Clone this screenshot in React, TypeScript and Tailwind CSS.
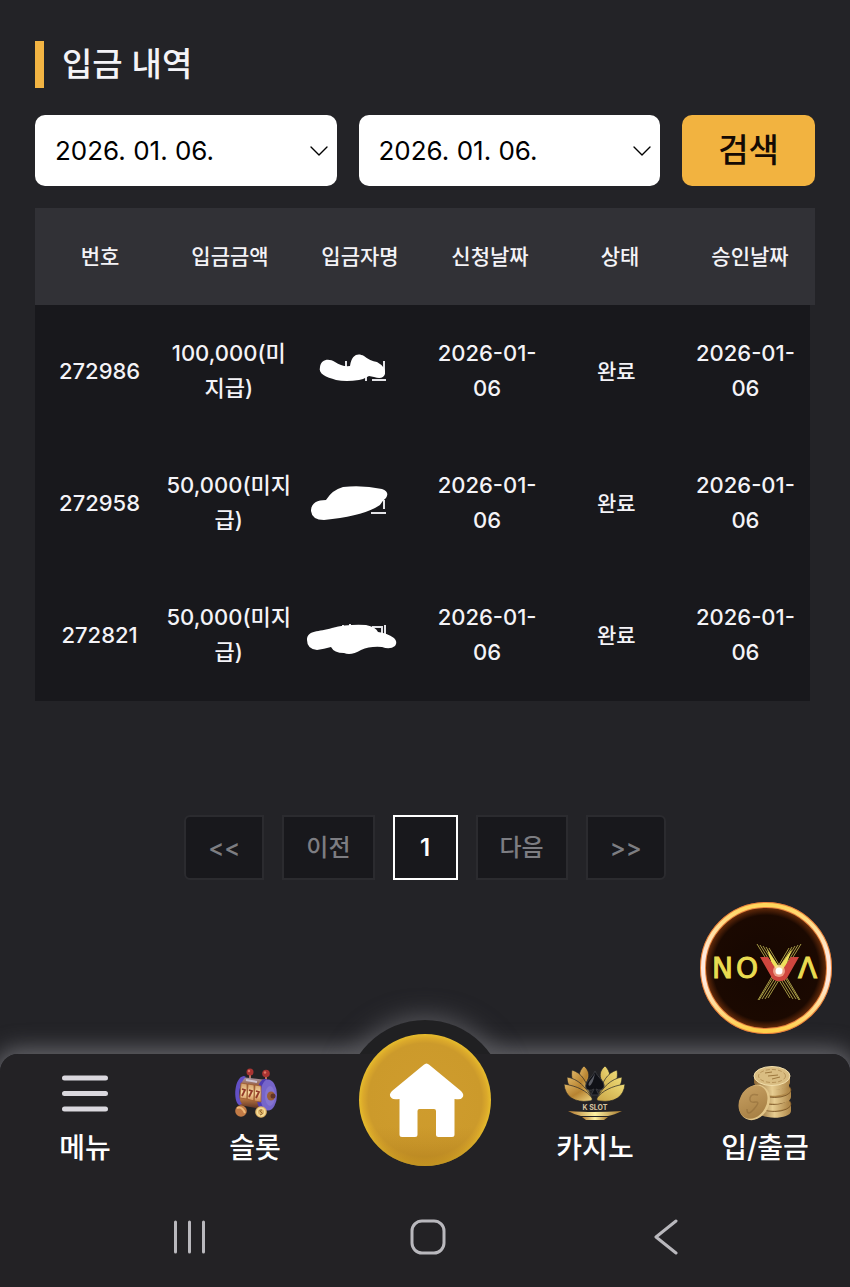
import type { ReactNode } from 'react'
import { ChevronDown } from 'lucide-react'

const deposits = [
  { id: '272986', amount: '100,000(미지급)', requested: '2026-01-06', status: '완료', approved: '2026-01-06' },
  { id: '272958', amount: '50,000(미지급)', requested: '2026-01-06', status: '완료', approved: '2026-01-06' },
  { id: '272821', amount: '50,000(미지급)', requested: '2026-01-06', status: '완료', approved: '2026-01-06' },
]

const columns = ['번호', '입금금액', '입금자명', '신청날짜', '상태', '승인날짜']

// brush marks that cover the depositor names
const scribbles = [
  <>
    <path d="M32 15v8M70 15v12M58 34h14M52 30v5" stroke="#e4e4e8" strokeWidth="2" fill="none" />
    <path
      d="M6 21C7 13 15 12 21 16Q28 21 36 20C38 8 44 7 50 10Q56 15 63 16Q72 21 71 28Q69 34 60 31L55 30Q50 33 45 34Q32 36 22 34C12 31 4 28 6 21Z"
      fill="#fff"
    />
  </>,
  <>
    <path d="M70 22v9M57 35h15" stroke="#e4e4e8" strokeWidth="2" fill="none" />
    <path
      d="M-3 33C-3 25 3 22 12 22Q18 12 29 9Q49 7 68 11Q76 14 72 20Q68 23 66 27Q50 38 10 42Q-2 42-3 33Z"
      fill="#fff"
    />
  </>,
  <>
    <path d="M29 15v6M36 14v4M59 17h9v8h-9zM71 15v11" stroke="#e4e4e8" strokeWidth="2" fill="none" />
    <path
      d="M-7 30C-7 20 5 22 18 18Q33 14 52 15Q62 17 64 22Q73 23 80 28Q84 32 81 36Q76 40 68 37Q56 36 47 40Q37 46 30 43Q20 43 17 37Q10 39 3 40Q-7 39-7 30Z"
      fill="#fff"
    />
  </>,
]

function DateSelect({ label }: { label: string }) {
  return (
    <div className="relative min-w-0 flex-1">
      <select
        aria-label={label}
        className="block h-[71px] w-full appearance-none rounded-[10px] bg-white pr-10 pl-5 text-[26px] text-black"
      >
        <option>2026. 01. 06.</option>
      </select>
      <ChevronDown
        size={32}
        strokeWidth={1}
        className="pointer-events-none absolute top-5 right-0.5 text-black"
      />
    </div>
  )
}

function PageButton({ children, className = '' }: { children: ReactNode; className?: string }) {
  return (
    <button
      type="button"
      className={`h-[65px] border-2 border-[#2b2b2f] bg-[#18181c] px-[22px] text-[24px] font-medium text-[#7d7d82] ${className}`}
    >
      {children}
    </button>
  )
}

function NavItem({ label, children }: { label: string; children: ReactNode }) {
  return (
    <a href="#" className="flex flex-col items-center gap-[7px] pt-[11px]">
      <span className="flex h-14 items-center justify-center">{children}</span>
      <span className="text-[28px] leading-10 font-medium">{label}</span>
    </a>
  )
}

function MenuIcon() {
  return (
    <svg width="46" height="38" viewBox="0 0 46 38" stroke="#dad8de" strokeWidth="5" strokeLinecap="round">
      <path d="M2.500 4h41M2.500 19.500h41M2.500 35h41" />
    </svg>
  )
}

function SlotIcon() {
  return (
    <svg width="44" height="50" viewBox="0 0 44 50">
      <defs>
        <linearGradient id="drum" x1="0" y1="0" x2="0" y2="1">
          <stop offset="0" stopColor="#a79cae" />
          <stop offset="0.25" stopColor="#9a5f42" />
          <stop offset="0.6" stopColor="#c98448" />
          <stop offset="1" stopColor="#51271f" />
        </linearGradient>
        <linearGradient id="reel" x1="0" y1="0" x2="0" y2="1">
          <stop offset="0" stopColor="#cf9a66" />
          <stop offset="0.5" stopColor="#f6d7a0" />
          <stop offset="1" stopColor="#cb8650" />
        </linearGradient>
      </defs>
      <path d="M17 5v7M33 6v8" stroke="#b8745e" strokeWidth="2" />
      <circle cx="17" cy="4" r="3.500" fill="#a93432" />
      <circle cx="33" cy="5.500" r="3.800" fill="#a93432" />
      <circle cx="16" cy="3" r="1.200" fill="#df7364" />
      <circle cx="32" cy="4.500" r="1.200" fill="#df7364" />
      <path d="M8 9L34 12V42L6 37Z" fill="url(#drum)" />
      <path d="M11 8C1 9 0 33 6 37L9 36C5 32 5 15 13 9Z" fill="#6350c5" />
      <ellipse cx="35" cy="27" rx="9" ry="15.500" fill="#7665ca" />
      <path d="M35 11C25 14 25 39 34 43L30 43C21 39 22 14 31 11Z" fill="#4e3cb4" />
      <ellipse cx="37" cy="28" rx="5" ry="10" fill="#8b7bd3" opacity=".7" />
      <path d="M8 15l6 1v15l-7-1zM15 16l6 1v16l-7-2zM22 17l6 1v16l-7-1z" fill="url(#reel)" stroke="#9c5a30" strokeWidth=".8" />
      <path d="M9 21l3 1-3 6M16 22l3 1-3 6M23 23l3 1-3 6" fill="none" stroke="#933a29" strokeWidth="1.800" />
      <path d="M13 12l11 2" stroke="#cdc3d2" strokeWidth="2" />
      <ellipse cx="38" cy="28" rx="4" ry="4.500" fill="#9b5e38" />
      <circle cx="40" cy="28" r="2.500" fill="#633426" />
      <circle cx="8" cy="43" r="5.800" fill="#c27b46" />
      <path d="M4 40q5-2 8 5" stroke="#edb878" strokeWidth="2" fill="none" />
      <circle cx="28" cy="44" r="5.800" fill="#e0b469" />
      <circle cx="28" cy="44" r="3.800" fill="none" stroke="#f6df9a" strokeWidth="1.500" />
      <path d="M29 42q-4 0-1 2t-1 3" stroke="#8c622b" fill="none" />
    </svg>
  )
}

function CasinoIcon() {
  return (
    <svg width="62" height="56" viewBox="0 0 62 56">
      <defs>
        <linearGradient id="petalL" x1="0" y1="0" x2="1" y2="1">
          <stop offset="0" stopColor="#dfb666" />
          <stop offset="0.5" stopColor="#b78331" />
          <stop offset="1" stopColor="#efd681" />
        </linearGradient>
        <linearGradient id="petalR" x1="1" y1="0" x2="0" y2="1">
          <stop offset="0" stopColor="#eedb76" />
          <stop offset="1" stopColor="#c9a445" />
        </linearGradient>
        <linearGradient id="stand">
          <stop offset="0" stopColor="#b47a30" />
          <stop offset="0.5" stopColor="#fbf0a2" />
          <stop offset="1" stopColor="#a7782c" />
        </linearGradient>
      </defs>
      <g fill="url(#petalL)" stroke="#232225" strokeWidth=".7">
        <path d="M20 1C26 6 26 12 22 18Q23 24 27 29C13 24 12 8 20 1Z" />
        <path d="M8 5C18 8 23 17 26 30C11 27 6 15 8 5Z" />
        <path d="M3 12C14 14 22 22 28 33C11 31 3 23 3 12Z" />
        <path d="M0 19C13 21 23 26 28 33Q29 36 25 36C11 38 1 32 0 19Z" />
      </g>
      <g fill="url(#petalR)" stroke="#232225" strokeWidth=".7">
        <path d="M41 1C35 6 35 12 39 18Q38 24 34 29C48 24 49 8 41 1Z" />
        <path d="M53 5C43 8 38 17 35 30C50 27 55 15 53 5Z" />
        <path d="M58 12C47 14 39 22 33 33C50 31 58 23 58 12Z" />
        <path d="M61 19C48 21 38 26 33 33Q32 36 36 36C50 38 60 32 61 19Z" />
      </g>
      <path d="M31 6C28 13 20 17 22 23Q25 27 30 24L27 30H35L32 24Q37 27 40 22C41 16 34 13 31 6Z" fill="#101117" stroke="#3a3b40" />
      <path d="M31 8C29 14 23 17 25 21Q29 20 31 8" fill="#595b64" />
      <text x="31" y="45" textAnchor="middle" fill="#d8c3a0" className="font-['Inter'] text-[7px] font-bold">K SLOT</text>
      <path d="M4 46Q20 47 29 47Q44 47 58 46Q50 50 44 51H17Q11 50 4 46Z" fill="url(#stand)" />
      <path d="M18 52H44L40 55H22Z" fill="url(#stand)" />
    </svg>
  )
}

function CoinsIcon() {
  return (
    <svg width="54" height="56" viewBox="0 0 54 56">
      <defs>
        <linearGradient id="coinEdge">
          <stop offset="0" stopColor="#8e6835" />
          <stop offset="0.5" stopColor="#e7cd91" />
          <stop offset="1" stopColor="#ae8648" />
        </linearGradient>
        <linearGradient id="coinFace" x1="0" y1="0" x2="1" y2="1">
          <stop offset="0" stopColor="#c9a264" />
          <stop offset="1" stopColor="#a27b40" />
        </linearGradient>
      </defs>
      {[39, 32, 25, 17].map((y, i) => (
        <g key={y}>
          <path
            d={i % 2 ? `M18 ${y}v7c0 9 33 9 33 0v-7z` : `M20 ${y}v7c0 9 33 9 33 0v-7z`}
            fill="url(#coinEdge)"
          />
          <ellipse cx={i % 2 ? 34.5 : 36.5} cy={y} rx="16.500" ry="7.500" fill="#b18a4b" stroke="#765225" strokeWidth=".8" />
        </g>
      ))}
      <path d="M16 11v6c0 11 36 11 36 0v-6z" fill="url(#coinEdge)" />
      <ellipse cx="34" cy="11" rx="18" ry="9.500" fill="#d9bd82" stroke="#f2dfac" />
      <ellipse cx="34" cy="11" rx="13.500" ry="6.500" fill="none" stroke="#b8955a" strokeDasharray="4 2" />
      <path d="M27 8l7-1M30 11l10-1M34 14l8-2" stroke="#9d783e" />
      <ellipse cx="16.500" cy="37.500" rx="14.500" ry="18.500" transform="rotate(28 16.500 37.500)" fill="#e2c689" />
      <ellipse cx="15" cy="37" rx="13.500" ry="17.500" transform="rotate(28 15 37)" fill="url(#coinFace)" />
      <path d="M20 30q-7-2-8 3t5 4-1 7-7 0" fill="none" stroke="#8b6836" strokeWidth="1.500" opacity=".5" />
    </svg>
  )
}

function HomeIcon() {
  return (
    <svg width="132" height="132" viewBox="0 0 132 132">
      <defs>
        <radialGradient id="gold" cx=".5" cy=".5" r=".5">
          <stop offset="0" stopColor="#cf9c2e" />
          <stop offset="0.86" stopColor="#cc9a2b" />
          <stop offset="0.94" stopColor="#dba92b" />
          <stop offset="1" stopColor="#e6bc2c" />
        </radialGradient>
        <linearGradient id="goldShade" x1="0" y1="0" x2="0" y2="1">
          <stop offset="0.7" stopColor="#b88322" stopOpacity="0" />
          <stop offset="1" stopColor="#a97719" stopOpacity=".6" />
        </linearGradient>
      </defs>
      <circle cx="66" cy="66" r="66" fill="url(#gold)" />
      <circle cx="66" cy="66" r="66" fill="url(#goldShade)" />
      <path
        d="M64.500 31Q67.500 28 70.500 31L102 57Q106 61 103 64Q102 66 95.500 65V100.500Q95.500 103 93 103H79.500Q77 103 77 100.500V77Q77 75 75 75H60.500Q58.500 75 58.500 77V100.500Q58.500 103 56 103H43Q40.500 103 40.500 100.500V65Q34 66 32.500 64Q29 61 33 57Z"
        fill="#fff"
      />
    </svg>
  )
}

function NovaBadge() {
  return (
    <svg width="132" height="132" viewBox="0 0 132 132">
      <defs>
        <radialGradient id="novaBg">
          <stop offset="0" stopColor="#160701" />
          <stop offset="0.8" stopColor="#1b0901" />
          <stop offset="0.9" stopColor="#5a2609" />
          <stop offset="1" stopColor="#b75a1c" />
        </radialGradient>
        <linearGradient id="novaRing" x1="0" y1="0" x2="0" y2="1">
          <stop offset="0" stopColor="#ffd65b" />
          <stop offset="0.4" stopColor="#ffe9de" />
          <stop offset="0.6" stopColor="#ffe9de" />
          <stop offset="1" stopColor="#ffd04a" />
        </linearGradient>
      </defs>
      <circle cx="66" cy="66" r="66" fill="url(#novaBg)" />
      <circle cx="66" cy="66" r="63" fill="none" stroke="#e8843f" strokeWidth="6" />
      <circle cx="66" cy="66" r="63" fill="none" stroke="url(#novaRing)" strokeWidth="4" />
      <g stroke="#a59a45" strokeWidth="1">
        <path d="M57 42L90 96M60 43L93 97M63 44L96 97M66 45L99 98M69 46L100 98" />
        <path d="M101 42L68 96M98 43L65 97M95 44L62 97M92 45L59 98M89 46L58 98" />
      </g>
      <path d="M67 47L79 65L92 47L83 72H75Z" fill="#eee05b" />
      <path d="M60 55H68L78 70H81L91 55H99L87 76Q85 79 82 79H77Q74 79 72 76Z" fill="#cf463e" />
      <circle cx="79" cy="69" r="6" fill="#ffd6b4" opacity=".6" />
      <circle cx="79" cy="69" r="3.500" fill="#fff" />
      <g fill="#eadb51" stroke="#eadb51" strokeWidth="1" className="font-['DejaVu_Sans'] text-[28px]">
        <text x="12" y="76">N</text>
        <text x="36" y="76">O</text>
        <text x="98" y="76">Λ</text>
      </g>
    </svg>
  )
}

export default function App() {
  return (
    <div className="flex min-h-screen flex-col bg-[#232327] font-['Inter','Noto_Sans_CJK_KR',sans-serif] text-[#f4f3f7]">
      <main className="px-[35px] pt-[41px] pb-10">
        <h1 className="flex items-center gap-[18px] text-[33px] leading-[47px] font-medium">
          <span className="h-[47px] w-[9px] bg-[#f2b443]" />
          입금 내역
        </h1>

        <form className="mt-[27px] flex gap-[22px]">
          <DateSelect label="시작일" />
          <DateSelect label="종료일" />
          <button type="button" className="w-[133px] rounded-[10px] bg-[#f2b340] text-[33px] font-medium text-[#140a04]">
            검색
          </button>
        </form>

        <table className="mt-[22px] block text-center text-[21px]">
          <thead className="block bg-[#313136]">
            <tr className="grid h-[97px] grid-cols-6 items-center">
              {columns.map((name) => (
                <th key={name} className="font-medium">{name}</th>
              ))}
            </tr>
          </thead>
          <tbody className="mr-[5px] block bg-[#18181c] font-medium">
            {deposits.map((row, i) => (
              <tr key={row.id} className="grid h-[132px] grid-cols-6 items-center leading-[35px]">
                <td className="text-[22px]">{row.id}</td>
                <td className="text-[22px] break-all">{row.amount}</td>
                <td className="flex justify-center">
                  <svg width="80" height="50" viewBox="4 0 80 50" className="overflow-visible">
                    {scribbles[i]}
                  </svg>
                </td>
                <td className="px-3 text-[22px]">{row.requested}</td>
                <td>{row.status}</td>
                <td className="px-3 text-[22px]">{row.approved}</td>
              </tr>
            ))}
          </tbody>
        </table>

        <div className="mt-[114px] flex justify-center gap-[18px]">
          <PageButton className="rounded-l-md">&lt;&lt;</PageButton>
          <PageButton>이전</PageButton>
          <button
            type="button"
            aria-current="page"
            className="h-[65px] w-[65px] border-2 border-white bg-[#18181c] text-[24px] font-semibold text-white"
          >
            1
          </button>
          <PageButton>다음</PageButton>
          <PageButton className="rounded-r-md">&gt;&gt;</PageButton>
        </div>
      </main>

      <footer className="relative mt-auto">
        <div className="absolute inset-0 rounded-t-[18px] shadow-[0_0_22px_5px_#68686d]" />
        <div className="absolute -top-[34px] left-1/2 size-40 -translate-x-1/2 rounded-full bg-[#202022] shadow-[0_0_24px_4px_#55555a]" />
        <div className="absolute inset-0 rounded-t-[18px] bg-[#232225]" />
        <a href="#" aria-label="NOVA" className="absolute -top-[152px] right-[18px]">
          <NovaBadge />
        </a>

        <nav className="relative grid grid-cols-5 text-white">
          <NavItem label="메뉴"><MenuIcon /></NavItem>
          <NavItem label="슬롯"><SlotIcon /></NavItem>
          <a href="#" aria-label="홈" className="-mt-5 flex justify-center">
            <HomeIcon />
          </a>
          <NavItem label="카지노"><CasinoIcon /></NavItem>
          <NavItem label="입/출금"><CoinsIcon /></NavItem>
        </nav>

        <div className="relative grid h-[119px] grid-cols-3 place-items-center pt-[18px] pr-[65px] pl-[71px]">
          <button type="button" aria-label="최근 앱">
            <svg width="36" height="36" viewBox="0 0 36 36" stroke="#b9b8bd" strokeWidth="3" strokeLinecap="round">
              <path d="M3.500 3v30M17.500 3v30M31.500 3v30" />
            </svg>
          </button>
          <button type="button" aria-label="홈 화면">
            <svg width="36" height="36" viewBox="0 0 36 36" fill="none" stroke="#b9b8bd" strokeWidth="3">
              <rect x="2" y="2" width="32" height="32" rx="10" />
            </svg>
          </button>
          <button type="button" aria-label="뒤로">
            <svg width="36" height="36" viewBox="0 0 36 36" fill="none" stroke="#b9b8bd" strokeWidth="3" strokeLinecap="round" strokeLinejoin="round">
              <path d="M28 2L8 18L28 34" />
            </svg>
          </button>
        </div>
      </footer>
    </div>
  )
}
